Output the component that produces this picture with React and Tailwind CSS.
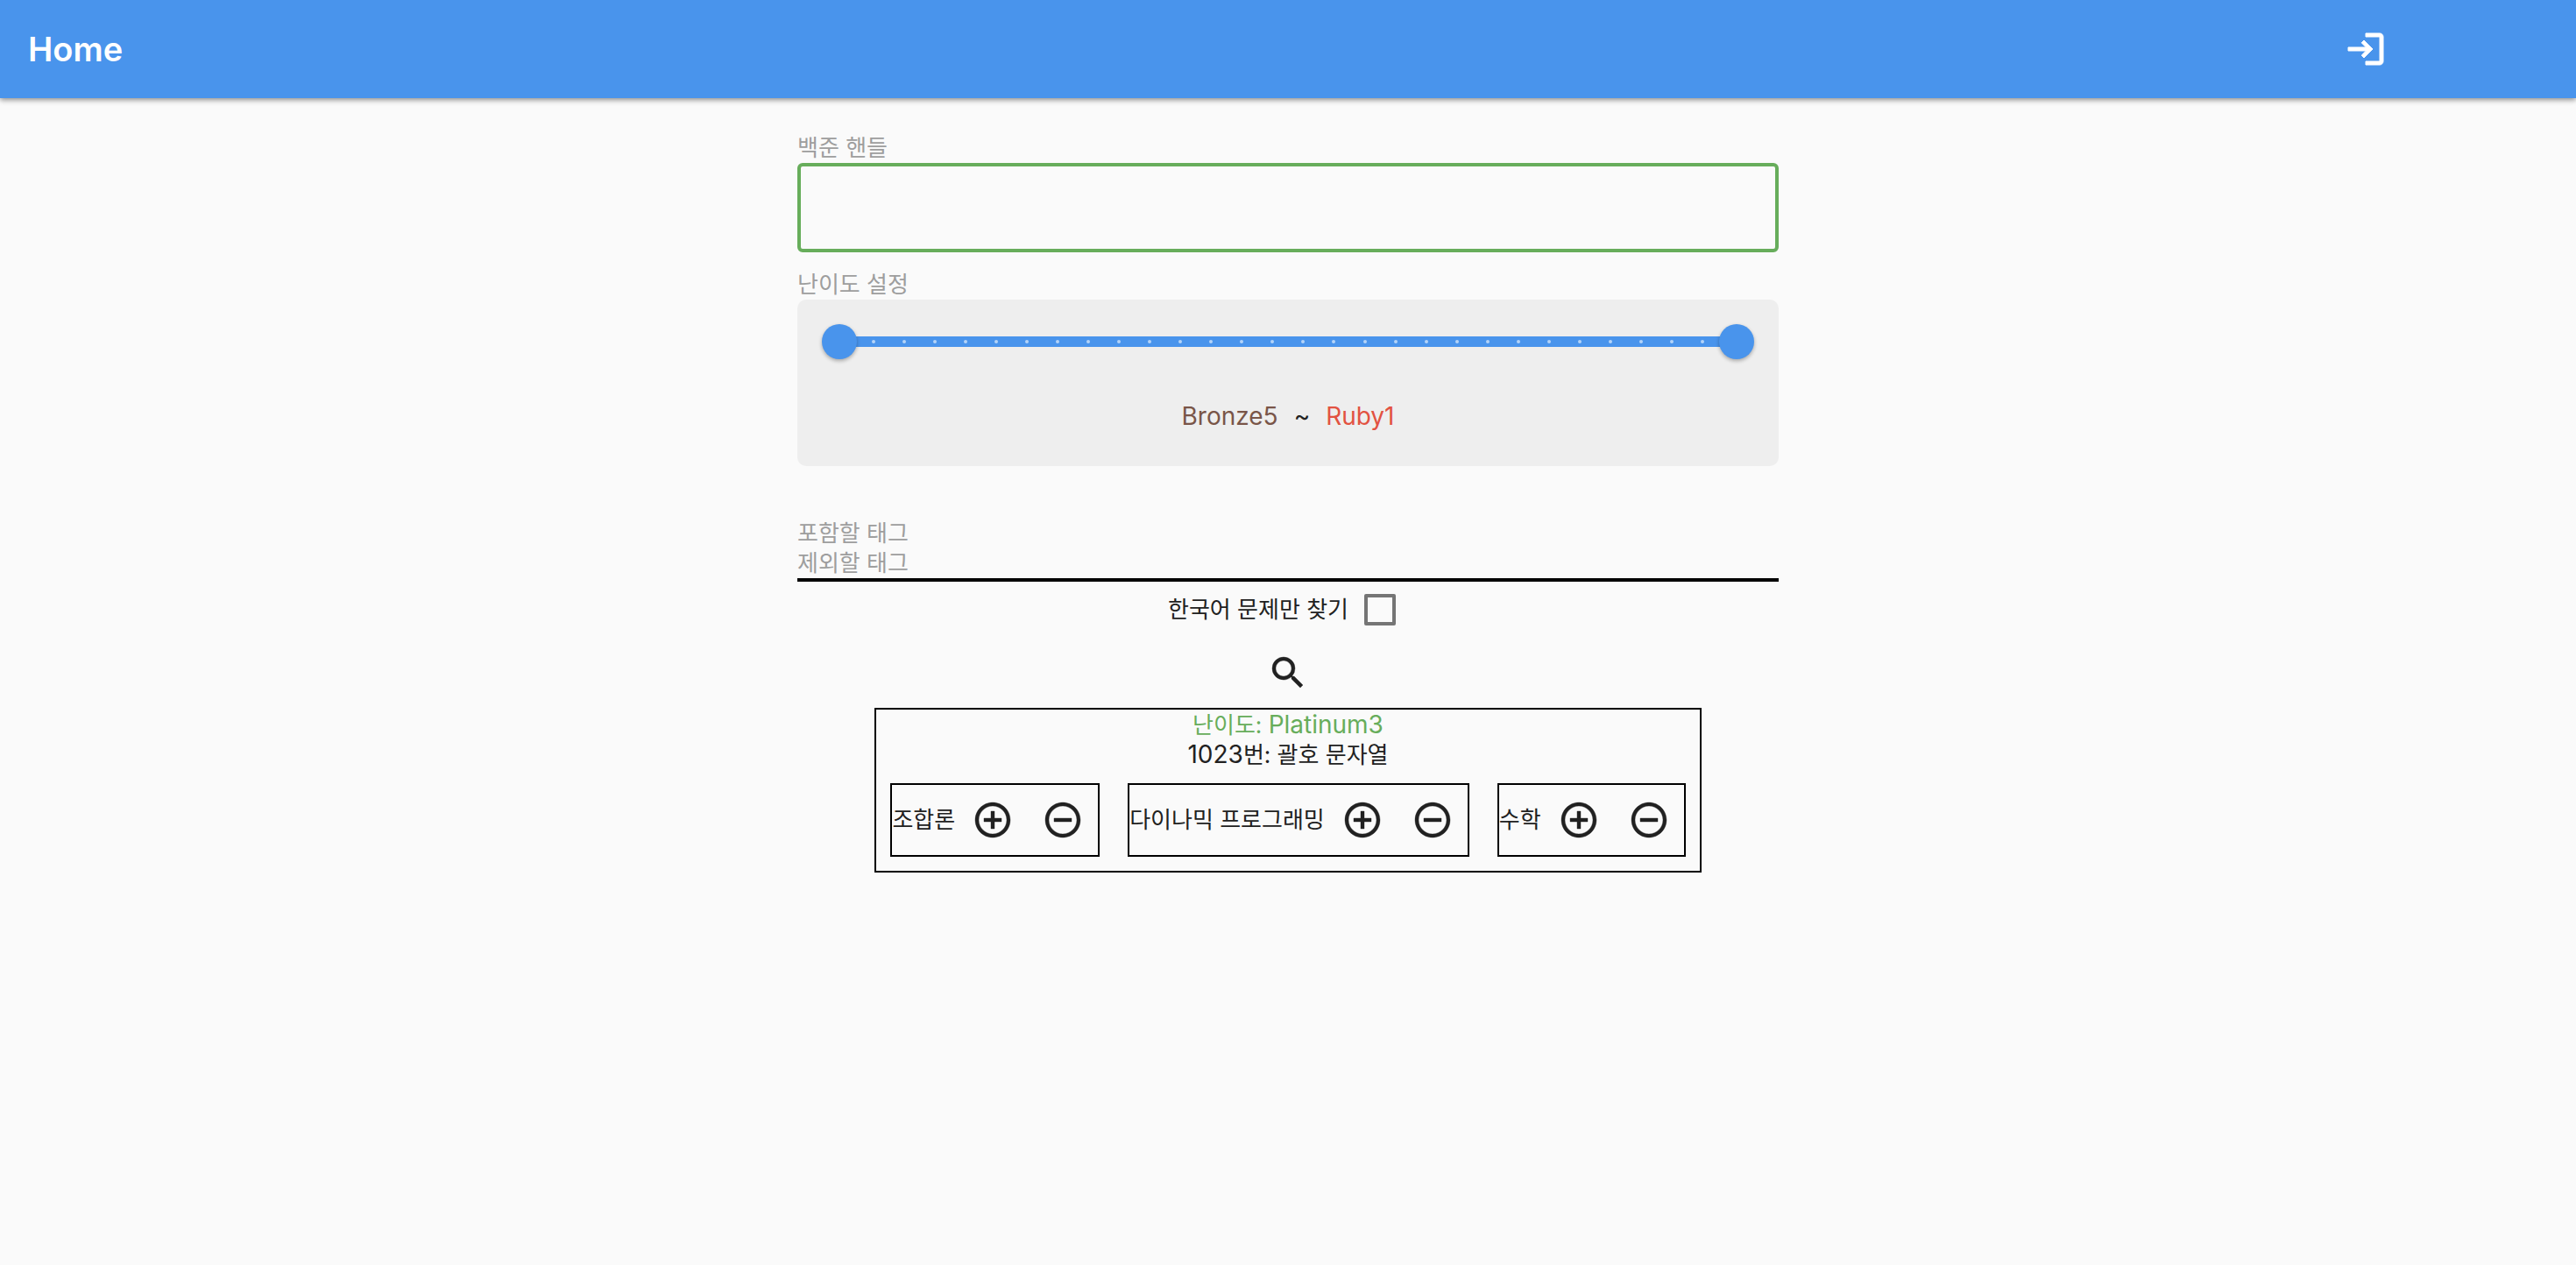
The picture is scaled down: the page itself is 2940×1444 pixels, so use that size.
import { useState } from "react";

const TIERS = [
  { name: "Bronze", color: "text-[#795548]" },
  { name: "Silver", color: "text-[#607d8b]" },
  { name: "Gold", color: "text-[#f19e38]" },
  { name: "Platinum", color: "text-[#67ad5b]" },
  { name: "Diamond", color: "text-[#4994ec]" },
  { name: "Ruby", color: "text-[#e25241]" },
];

const LEVELS = 30;
const TICKS = Array.from({ length: LEVELS - 2 }, (_, i) => i);
const TAGS = ["조합론", "다이나믹 프로그래밍", "수학"];

const ICONS = {
  login:
    "M11 7 9.6 8.4l2.6 2.6H2v2h10.2l-2.6 2.6L11 17l5-5-5-5zm9 12h-8v2h8c1.1 0 2-.9 2-2V5c0-1.1-.9-2-2-2h-8v2h8v14z",
  search:
    "M15.5 14h-.79l-.28-.27A6.471 6.471 0 0 0 16 9.5 6.5 6.5 0 1 0 9.5 16c1.61 0 3.09-.59 4.23-1.57l.27.28v.79l5 4.99L20.49 19l-4.99-5zm-6 0C7.01 14 5 11.99 5 9.5S7.01 5 9.5 5 14 7.01 14 9.5 11.99 14 9.5 14z",
  add: "M13 7h-2v4H7v2h4v4h2v-4h4v-2h-4V7zm-1-5C6.48 2 2 6.48 2 12s4.48 10 10 10 10-4.48 10-10S17.52 2 12 2zm0 18c-4.41 0-8-3.59-8-8s3.59-8 8-8 8 3.59 8 8-3.59 8-8 8z",
  remove:
    "M7 11v2h10v-2H7zm5-9C6.48 2 2 6.48 2 12s4.48 10 10 10 10-4.48 10-10S17.52 2 12 2zm0 18c-4.41 0-8-3.59-8-8s3.59-8 8-8 8 3.59 8 8-3.59 8-8 8z",
};

const THUMB =
  "pointer-events-none absolute inset-x-0 top-0 h-24 w-full appearance-none bg-transparent outline-none [&::-webkit-slider-thumb]:pointer-events-auto [&::-webkit-slider-thumb]:size-10 [&::-webkit-slider-thumb]:appearance-none [&::-webkit-slider-thumb]:rounded-full [&::-webkit-slider-thumb]:bg-[#4994ec] [&::-webkit-slider-thumb]:shadow-[0_2px_4px_rgba(0,0,0,0.3)]";

function IconButton({ icon, label, type = "button", weight = 0.2 }) {
  return (
    <button
      type={type}
      aria-label={label}
      className="flex size-20 items-center justify-center self-center"
    >
      <svg
        viewBox="0 0 24 24"
        className="size-12 fill-current stroke-current"
        strokeWidth={weight}
        aria-hidden="true"
      >
        <path d={ICONS[icon]} />
      </svg>
    </button>
  );
}

function TierName({ level }) {
  const tier = TIERS[Math.floor((level - 1) / 5)];
  return (
    <span className={tier.color}>
      {tier.name}
      {5 - ((level - 1) % 5)}
    </span>
  );
}

function Header() {
  return (
    <header className="flex h-28 items-center justify-between bg-[#4994ec] pr-[200px] pl-8 text-white shadow-[0_2px_6px_rgba(0,0,0,0.45)]">
      <h1 className="text-[38px] leading-[48px] font-semibold">Home</h1>
      <IconButton icon="login" label="로그인" weight={0.5} />
    </header>
  );
}

function LevelRange() {
  const [low, setLow] = useState(1);
  const [high, setHigh] = useState(LEVELS);
  return (
    <fieldset className="mt-5">
      <legend className="text-[26px] leading-[34px] text-[#9e9e9e]">
        난이도 설정
      </legend>
      <div className="rounded-[10px] bg-[#eeeeee] px-7 pb-10">
        <div className="relative flex h-24 items-center px-3">
          <div className="flex h-3 flex-1 items-center justify-between rounded-full bg-[#4994ec] px-[45px]">
            {TICKS.map((i) => (
              <span key={i} className="size-1 rounded-full bg-[#b3d3f8]" />
            ))}
          </div>
          <input
            type="range"
            aria-label="최소 난이도"
            min={1}
            max={LEVELS}
            value={low}
            onChange={(e) => setLow(Math.min(Number(e.target.value), high))}
            className={THUMB}
          />
          <input
            type="range"
            aria-label="최대 난이도"
            min={1}
            max={LEVELS}
            value={high}
            onChange={(e) => setHigh(Math.max(Number(e.target.value), low))}
            className={THUMB}
          />
        </div>
        <p className="mt-5 flex justify-center gap-[18px] text-[28px] leading-[34px]">
          <TierName level={low} />
          <span>~</span>
          <TierName level={high} />
        </p>
      </div>
    </fieldset>
  );
}

function Tag({ name }) {
  return (
    <li className="flex items-center border-2 border-black">
      <span className="pr-[3px]">{name}</span>
      <IconButton icon="add" label={`${name} 포함`} />
      <IconButton icon="remove" label={`${name} 제외`} />
    </li>
  );
}

export default function App() {
  return (
    <div className="min-h-screen bg-[#fafafa] font-['Inter','Noto_Sans_CJK_KR',sans-serif] text-[26px] leading-[34px] text-[#212121]">
      <Header />
      <main className="flex flex-col items-center pt-10">
        <form
          className="flex w-full max-w-[1120px] flex-col"
          onSubmit={(e) => e.preventDefault()}
        >
          <label htmlFor="handle" className="text-[#9e9e9e]">
            백준 핸들
          </label>
          <input
            id="handle"
            type="text"
            className="h-[102px] w-full rounded-md border-4 border-[#67ad5b] bg-transparent px-5 outline-none"
          />
          <LevelRange />
          <div className="mt-[60px] border-b-4 border-black text-[#9e9e9e]">
            <p>포함할 태그</p>
            <p>제외할 태그</p>
          </div>
          <label className="flex h-16 items-center self-center pr-3.5">
            <span className="pr-[18px]">한국어 문제만 찾기</span>
            <input
              type="checkbox"
              className="size-9 appearance-none rounded-xs border-4 border-[#757575] checked:bg-[#4994ec]"
            />
          </label>
          <IconButton icon="search" label="검색" type="submit" />
        </form>
        <section className="border-2 border-black text-center">
          <p className="h-[34px] text-[#67ad5b]">
            난이도: <span className="text-[28px]">Platinum3</span>
          </p>
          <p className="h-[34px]">
            <span className="text-[28px]">1023</span>번: 괄호 문자열
          </p>
          <ul className="flex flex-wrap justify-center gap-8 p-4">
            {TAGS.map((name) => (
              <Tag key={name} name={name} />
            ))}
          </ul>
        </section>
      </main>
    </div>
  );
}
